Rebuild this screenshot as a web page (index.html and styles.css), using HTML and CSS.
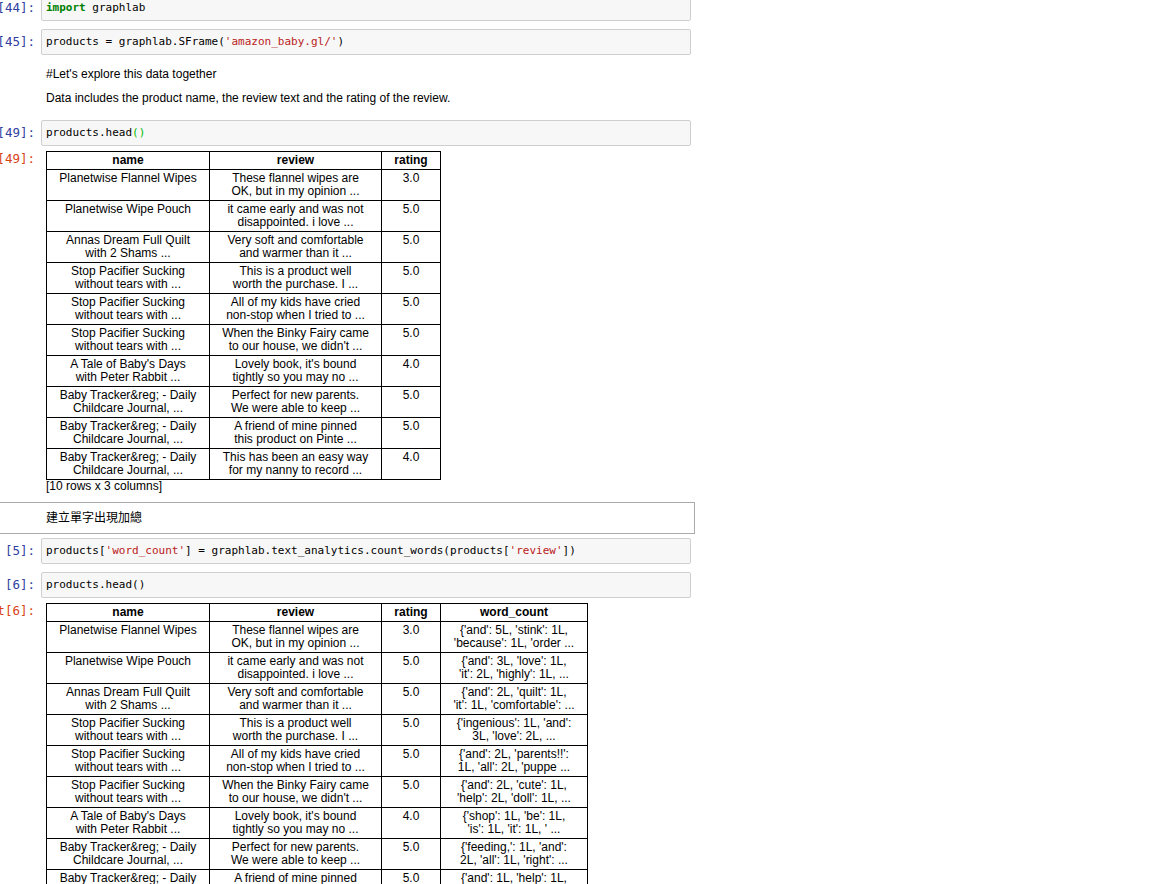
FILE: index.html
```html
<!DOCTYPE html>
<html>
<head>
<meta charset="utf-8">
<title>Notebook</title>
<link rel="stylesheet" href="styles.css">
</head>
<body>
<div class="nb">
  <div class="cell">
    <div class="row">
      <div class="prompt in">In [44]:</div>
      <div class="input"><span class="kw">import</span> graphlab</div>
    </div>
  </div>
  <div class="cell">
    <div class="row">
      <div class="prompt in">In [45]:</div>
      <div class="input">products = graphlab.SFrame(<span class="str">'amazon_baby.gl/'</span>)</div>
    </div>
  </div>
  <div class="cell md">
    <div class="row">
      <div class="prompt"></div>
      <div class="text">
        <p>#Let's explore this data together</p>
        <p>Data includes the product name, the review text and the rating of the review.</p>
      </div>
    </div>
  </div>
  <div class="cell">
    <div class="row">
      <div class="prompt in">In [49]:</div>
      <div class="input">products.head<span class="mb">()</span></div>
    </div>
    <div class="row out-row">
      <div class="prompt out">Out[49]:</div>
      <div class="output">
        <table class="df">
          <thead>
            <tr><th class="c-name">name</th><th class="c-review">review</th><th class="c-rating">rating</th></tr>
          </thead>
          <tbody>
            <tr><td>Planetwise Flannel Wipes</td><td>These flannel wipes are<br>OK, but in my opinion ...</td><td>3.0</td></tr>
            <tr><td>Planetwise Wipe Pouch</td><td>it came early and was not<br>disappointed. i love ...</td><td>5.0</td></tr>
            <tr><td>Annas Dream Full Quilt<br>with 2 Shams ...</td><td>Very soft and comfortable<br>and warmer than it ...</td><td>5.0</td></tr>
            <tr><td>Stop Pacifier Sucking<br>without tears with ...</td><td>This is a product well<br>worth the purchase.  I ...</td><td>5.0</td></tr>
            <tr><td>Stop Pacifier Sucking<br>without tears with ...</td><td>All of my kids have cried<br>non-stop when I tried to ...</td><td>5.0</td></tr>
            <tr><td>Stop Pacifier Sucking<br>without tears with ...</td><td>When the Binky Fairy came<br>to our house, we didn't ...</td><td>5.0</td></tr>
            <tr><td>A Tale of Baby's Days<br>with Peter Rabbit ...</td><td>Lovely book, it's bound<br>tightly so you may no ...</td><td>4.0</td></tr>
            <tr><td>Baby Tracker&amp;reg; - Daily<br>Childcare Journal, ...</td><td>Perfect for new parents.<br>We were able to keep ...</td><td>5.0</td></tr>
            <tr><td>Baby Tracker&amp;reg; - Daily<br>Childcare Journal, ...</td><td>A friend of mine pinned<br>this product on Pinte ...</td><td>5.0</td></tr>
            <tr><td>Baby Tracker&amp;reg; - Daily<br>Childcare Journal, ...</td><td>This has been an easy way<br>for my nanny to record ...</td><td>4.0</td></tr>
          </tbody>
        </table>
        <div class="caption">[10 rows x 3 columns]</div>
      </div>
    </div>
  </div>
  <div class="cell md selected">
    <div class="row">
      <div class="prompt"></div>
      <div class="text"><p>建立單字出現加總</p></div>
    </div>
  </div>
  <div class="cell">
    <div class="row">
      <div class="prompt in">In [5]:</div>
      <div class="input">products[<span class="str">'word_count'</span>] = graphlab.text_analytics.count_words(products[<span class="str">'review'</span>])</div>
    </div>
  </div>
  <div class="cell">
    <div class="row">
      <div class="prompt in">In [6]:</div>
      <div class="input">products.head()</div>
    </div>
    <div class="row out-row">
      <div class="prompt out">Out[6]:</div>
      <div class="output">
        <table class="df">
          <thead>
            <tr><th class="c-name">name</th><th class="c-review">review</th><th class="c-rating">rating</th><th class="c-wc">word_count</th></tr>
          </thead>
          <tbody>
            <tr><td>Planetwise Flannel Wipes</td><td>These flannel wipes are<br>OK, but in my opinion ...</td><td>3.0</td><td>{'and': 5L, 'stink': 1L,<br>'because': 1L, 'order ...</td></tr>
            <tr><td>Planetwise Wipe Pouch</td><td>it came early and was not<br>disappointed. i love ...</td><td>5.0</td><td>{'and': 3L, 'love': 1L,<br>'it': 2L, 'highly': 1L, ...</td></tr>
            <tr><td>Annas Dream Full Quilt<br>with 2 Shams ...</td><td>Very soft and comfortable<br>and warmer than it ...</td><td>5.0</td><td>{'and': 2L, 'quilt': 1L,<br>'it': 1L, 'comfortable': ...</td></tr>
            <tr><td>Stop Pacifier Sucking<br>without tears with ...</td><td>This is a product well<br>worth the purchase.  I ...</td><td>5.0</td><td>{'ingenious': 1L, 'and':<br>3L, 'love': 2L, ...</td></tr>
            <tr><td>Stop Pacifier Sucking<br>without tears with ...</td><td>All of my kids have cried<br>non-stop when I tried to ...</td><td>5.0</td><td>{'and': 2L, 'parents!!':<br>1L, 'all': 2L, 'puppe ...</td></tr>
            <tr><td>Stop Pacifier Sucking<br>without tears with ...</td><td>When the Binky Fairy came<br>to our house, we didn't ...</td><td>5.0</td><td>{'and': 2L, 'cute': 1L,<br>'help': 2L, 'doll': 1L, ...</td></tr>
            <tr><td>A Tale of Baby's Days<br>with Peter Rabbit ...</td><td>Lovely book, it's bound<br>tightly so you may no ...</td><td>4.0</td><td>{'shop': 1L, 'be': 1L,<br>'is': 1L, 'it': 1L, ' ...</td></tr>
            <tr><td>Baby Tracker&amp;reg; - Daily<br>Childcare Journal, ...</td><td>Perfect for new parents.<br>We were able to keep ...</td><td>5.0</td><td>{'feeding,': 1L, 'and':<br>2L, 'all': 1L, 'right': ...</td></tr>
            <tr><td>Baby Tracker&amp;reg; - Daily<br>Childcare Journal, ...</td><td>A friend of mine pinned<br>this product on Pinte ...</td><td>5.0</td><td>{'and': 1L, 'help': 1L,<br>'pinned': 1L, 'it': ...</td></tr>
            <tr><td>Baby Tracker&amp;reg; - Daily<br>Childcare Journal, ...</td><td>This has been an easy way<br>for my nanny to record ...</td><td>4.0</td><td>{'journal.': 1L, 'nanny':<br>1L, 'all': 1L, 'of': ...</td></tr>
          </tbody>
        </table>
        <div class="caption">[10 rows x 4 columns]</div>
      </div>
    </div>
  </div>
</div>
</body>
</html>
```

FILE: styles.css
```css
html {
  overflow: hidden;
}

body {
  margin: 0;
  background: #ffffff;
  color: #000000;
  font-family: "Liberation Sans", Arial, sans-serif;
}

.nb {
  margin: -9px 0 0 -6px;
  width: 701px;
}

.cell {
  border: 1px solid transparent;
  padding: 3px 3px 3px 5px;
}

.cell.md {
  padding: 5px 3px 8px 5px;
}

.cell.md.selected {
  border-color: #ababab;
  padding: 6px 3px 6px 5px;
}

.row {
  display: flex;
}

.prompt {
  flex: none;
  width: 41px;
  box-sizing: border-box;
  padding-right: 6px;
  display: flex;
  justify-content: flex-end;
  white-space: nowrap;
  font: 12.5px/14px "DejaVu Sans Mono", monospace;
}

.prompt.in {
  color: #303f9f;
  padding-top: 6px;
}

.prompt.out {
  color: #d84315;
  padding-top: 1px;
}

.input {
  flex: 1;
  min-width: 0;
  border: 1px solid #cfcfcf;
  border-radius: 2px;
  background: #f7f7f7;
  padding: 5px 4px;
  font: 11px/14px "DejaVu Sans Mono", monospace;
  white-space: pre;
  color: #000000;
}

.kw {
  color: #008000;
  font-weight: bold;
}

.str {
  color: #ba2121;
}

.mb {
  color: #00bb00;
}

.text {
  flex: 1;
  padding-left: 5px;
  font: 12px/18px "Liberation Sans", Arial, "Noto Sans CJK TC", sans-serif;
}

.text p {
  margin: 0;
}

.text p + p {
  margin-top: 6px;
}

.out-row {
  margin-top: 5px;
  padding-bottom: 6px;
}

.output {
  flex: 1;
  padding-left: 5px;
}

.df {
  border-collapse: collapse;
  table-layout: fixed;
  font: 12px/13px "Liberation Sans", Arial, sans-serif;
  color: #000000;
}

.df th,
.df td {
  box-sizing: border-box;
  border: 1px solid #000000;
  padding: 2px 4px;
  text-align: center;
  vertical-align: top;
  white-space: nowrap;
}

.df th {
  font-weight: bold;
}

.c-name {
  width: 163px;
}

.c-review {
  width: 172px;
}

.c-rating {
  width: 59px;
}

.c-wc {
  width: 147px;
}

.caption {
  font: 12px/12px "Liberation Sans", Arial, sans-serif;
}
```
